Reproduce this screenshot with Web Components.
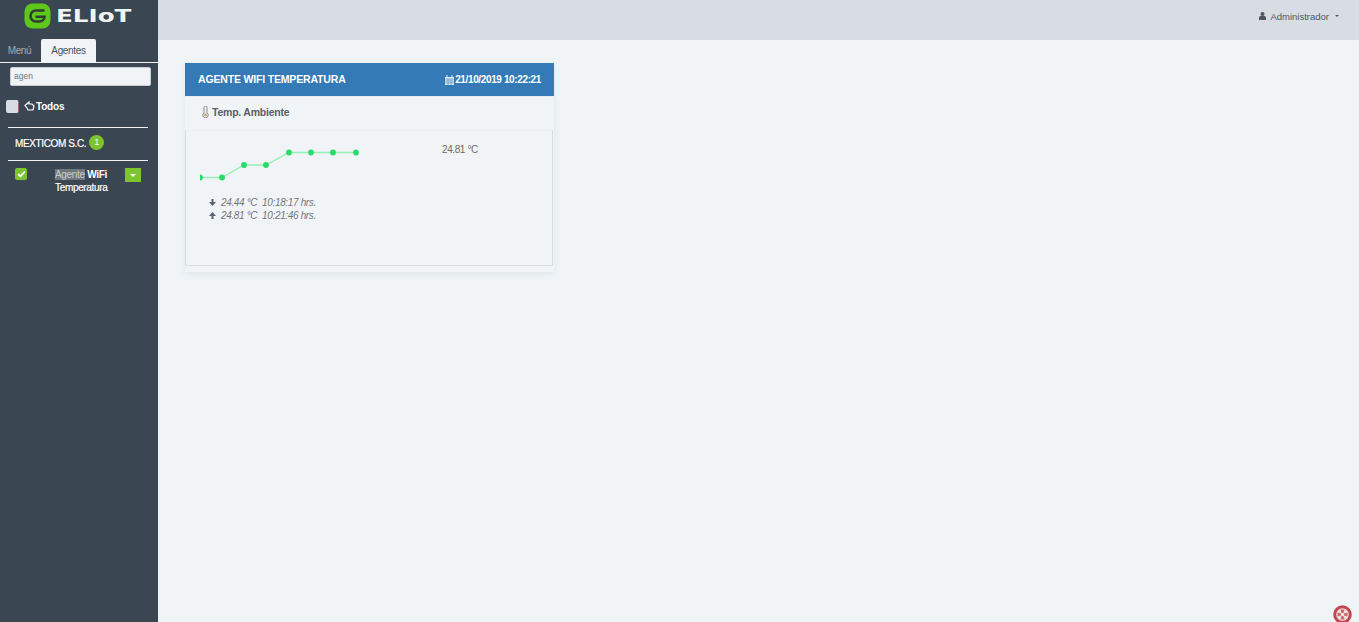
<!DOCTYPE html>
<html lang="es"><head><meta charset="utf-8"><title>Eliot</title>
<style>
html,body{margin:0;height:100%;overflow:hidden;background:#f0f4f7;font-family:"Liberation Sans",Arial,sans-serif}
</style></head><body>
<app-shell>
  <side-bar slot="side"></side-bar>
  <top-bar slot="top"></top-bar>
  <agent-card slot="main"></agent-card>
</app-shell>
<script>
function def(name, html){
  customElements.define(name, class extends HTMLElement{
    constructor(){super();this.attachShadow({mode:'open'}).innerHTML=html;}
  });
}
def('app-shell',`<style>
:host{display:grid;grid-template-columns:158px 1fr;grid-template-rows:40px 1fr;height:622px;width:1359px;position:relative;overflow:hidden}
.side{grid-row:1/3;grid-column:1;display:block;min-height:0}
.top{grid-row:1;grid-column:2}
main{grid-row:2;grid-column:2;padding:23px 0 0 27px;background:#f0f4f7}
.help{position:absolute;right:7px;bottom:-2px;width:19px;height:19px}
</style>
<div class="side"><slot name="side"></slot></div>
<div class="top"><slot name="top"></slot></div>
<main><slot name="main"></slot></main>
<svg class="help" viewBox="0 0 19 19"><circle cx="9.5" cy="9.5" r="7.8" fill="#f0dede" stroke="#c0474f" stroke-width="3"/><path d="M7.5 4.5h4L10.5 8h-2zM7.5 14.5h4L10.5 11h-2zM4.5 7.5v4L8 10.5v-2zM14.5 7.5v4L11 10.5v-2z" fill="#d0676e"/></svg>`);

def('side-bar',`<style>
:host{display:flex;flex-direction:column;height:622px;background:#3a4651;color:#fff;font-size:10px;letter-spacing:-.33px;box-sizing:border-box}
.logo{height:39px;display:flex;align-items:flex-start;padding:3px 0 0 24px;box-sizing:border-box;gap:5px;overflow:hidden}
.logo span{font:bold 18.5px "DejaVu Sans",sans-serif;color:#f2f2f2;display:inline-block;transform:scaleX(1.33);transform-origin:0 50%;line-height:19px;margin-top:3px;letter-spacing:0}
.tabs{height:24px;display:flex;border-bottom:1px solid #f0f4f7;box-sizing:border-box}
.tabs div{line-height:23px;white-space:nowrap;display:flex;justify-content:center}
.tabs .off{color:#a4abb1;width:41px;box-sizing:border-box;padding-right:2px}
.tabs .on{background:#f0f4f7;color:#49525a;width:55px;box-sizing:border-box;border-radius:2px 2px 0 0}
.search{margin:4px 7px 0 10px;height:19px;box-sizing:border-box;background:#f0f4f7;border:1px solid #c8ced5;border-radius:2px;font-size:8.5px;line-height:16px;color:#70777e;padding-left:3px;letter-spacing:0}
.all{display:flex;align-items:center;margin:11px 0 0 6px;height:18px;font-weight:bold;color:#fff;letter-spacing:-.2px}
.chk{width:13px;height:13px;border-radius:2px;background:#d8dce3;border-right:1px solid #a3676b;box-sizing:border-box}
.all svg{margin:0 1px 0 5px}
hr{border:0;height:1px;background:#f0f4f7;margin:0 10px 0 8px}
.org{display:flex;align-items:center;height:32px;padding:0 0 2px 15px;box-sizing:border-box;color:#fff;gap:3px;letter-spacing:-.38px;-webkit-text-stroke:.2px #fff}
.org i{display:block;width:15px;height:15px;border-radius:50%;background:#7cc52c;font:normal 9px/14px "Liberation Sans",sans-serif;text-align:center;margin-top:-2px;-webkit-text-stroke:0}
.agent{display:grid;grid-template-columns:12px 98px 16px;padding:7px 0 0 15px;line-height:13px}
.agent .g{width:12px;height:12px;background:#7cc52c;border-radius:2px;display:flex;align-items:center;justify-content:center}
.agent mark{background:#6f767c;color:#c9ccce;-webkit-text-stroke:0}
.agent .d{width:16px;height:14px;background:#7cc52c;display:flex;align-items:center;justify-content:center}
.agent .d b{display:block;width:0;height:0;border:3px solid transparent;border-top-color:#fff;border-bottom:0}
.name{margin-left:28px;width:56px;-webkit-text-stroke:.2px #fff}
.name strong{font-weight:bold;-webkit-text-stroke:0}
</style>
<div class="logo">
<svg width="27" height="26" viewBox="0 0 27 26" style="flex:none"><rect x="0.5" y="0.5" width="26" height="25" rx="8" fill="#5fc71a"/><path d="M20.5 7.5H12a5.5 5.5 0 0 0 0 11h3.5a5 5 0 0 0 5-4.7H11.5" fill="none" stroke="#2f3b36" stroke-width="2.6"/></svg>
<span>ELIoT</span></div>
<div class="tabs"><div class="off">Menú</div><div class="on">Agentes</div></div>
<div class="search">agen</div>
<div class="all"><div class="chk"></div><svg width="11" height="10" viewBox="0 0 11 10"><path d="M1 4.5 5 1v2h3l2 2-1 4H4L3 7z" fill="none" stroke="#fff" stroke-width="1.2"/></svg>Todos</div>
<hr style="margin-top:12px">
<div class="org">MEXTICOM S.C.<i>1</i></div>
<hr>
<div class="agent">
<div class="g"><svg width="9" height="8" viewBox="0 0 9 8"><path d="M1 4l2.4 2.4L8 1.5" fill="none" stroke="#fff" stroke-width="1.8"/></svg></div>
<div class="name"><mark>Agente</mark> <strong>WiFi</strong> Temperatura</div>
<div class="d"><b></b></div>
</div>`);

def('top-bar',`<style>
:host{display:flex;justify-content:flex-end;align-items:center;height:40px;background:#d8dce3;color:#4d5763;font-size:9.5px;padding:0 20px 8px 0;box-sizing:border-box}
svg{margin-right:4px}
b{display:block;width:0;height:0;border:2.5px solid transparent;border-top-color:#4d5763;border-bottom:0;margin-left:6px}
</style>
<svg width="7" height="8" viewBox="0 0 7 8"><circle cx="3.5" cy="2" r="2" fill="#4d5763"/><path d="M0 8V5.5Q0 4 1.5 4h4Q7 4 7 5.5V8z" fill="#4d5763"/></svg>Administrador<b></b>`);

def('temp-chart',`<style>
:host{display:block;height:65px;position:relative}
svg{display:block;position:absolute;left:14px;top:-1px}
.now{position:absolute;left:256px;top:13px;font-size:10px;letter-spacing:-.4px;color:#6f6a66}
</style>
<svg width="170" height="60" viewBox="200 130 170 60">
<polyline points="200,177.5 222,177.5 244,165 266,165 289,152.5 311,152.5 333,152.5 356,152.5" fill="none" stroke="#98eeb3" stroke-width="1.3"/>
<g fill="#27dc69"><circle cx="200" cy="177.5" r="2.9"/><circle cx="222" cy="177.5" r="2.9"/><circle cx="244" cy="165" r="2.9"/><circle cx="266" cy="165" r="2.9"/><circle cx="289" cy="152.5" r="2.9"/><circle cx="311" cy="152.5" r="2.9"/><circle cx="333" cy="152.5" r="2.9"/><circle cx="356" cy="152.5" r="2.9"/></g>
</svg>
<div class="now">24.81 °C</div>`);

def('agent-card',`<style>
:host{display:block;width:369px;height:209px;box-shadow:0 2px 6px rgba(120,130,140,.12);font-size:10px;color:#55595e}
header{height:33px;background:#337ab7;color:#fff;font-weight:bold;display:flex;align-items:center;justify-content:space-between;padding:0 13px;box-sizing:border-box}
header span{display:flex;align-items:center;gap:1px;letter-spacing:-.37px}
h2{margin:0;font-size:10.5px;letter-spacing:-.17px;font-weight:bold;line-height:33px}
.sub{height:34px;display:flex;align-items:center;padding:0 0 3px 16px;font-weight:bold;font-size:10.5px;color:#5a5f66;gap:2px;letter-spacing:-.22px;box-sizing:border-box;border-top:1px solid #e8edf1}
.box{height:136px;box-sizing:border-box;border:1px solid #d8dce1;border-top:1px solid #ebeff2;margin-right:1px}
ul{list-style:none;margin:0;padding:0 0 0 23px;font-style:italic;color:#73777c;font-size:10px;letter-spacing:-.35px;line-height:13px}
li{display:flex;align-items:center;gap:5px;white-space:pre}
</style>
<header><h2>AGENTE WIFI TEMPERATURA</h2><span><svg width="9" height="10" viewBox="0 0 9 10"><path d="M0 2h9v8H0z" fill="#e6eff7"/><path d="M0 4h9M3 4v6M6 4v6M0 6h9M0 8h9" stroke="#337ab7" stroke-width=".6"/><path d="M2 0v2M7 0v2" stroke="#e6eff7"/></svg>21/10/2019 10:22:21</span></header>
<div class="sub"><svg width="9" height="12" viewBox="0 0 9 12"><path d="M3 1.5a1.5 1.5 0 0 1 3 0V7a2.7 2.7 0 1 1-3 0z" fill="#eef0f0" stroke="#8a8d90"/><circle cx="4.5" cy="9" r="1.4" fill="#c9a27a"/></svg>Temp. Ambiente</div>
<div class="box">
<temp-chart></temp-chart>
<ul>
<li><svg width="7" height="7" viewBox="0 0 7 7"><path d="M2.5 0h2v3H7L3.5 7 0 3h2.5z" fill="#5a6470"/></svg>24.44 °C  10:18:17 hrs.</li>
<li><svg width="7" height="7" viewBox="0 0 7 7"><path d="M2.5 7h2V4H7L3.5 0 0 4h2.5z" fill="#5a6470"/></svg>24.81 °C  10:21:46 hrs.</li>
</ul>
</div>`);
</script>
</body></html>
